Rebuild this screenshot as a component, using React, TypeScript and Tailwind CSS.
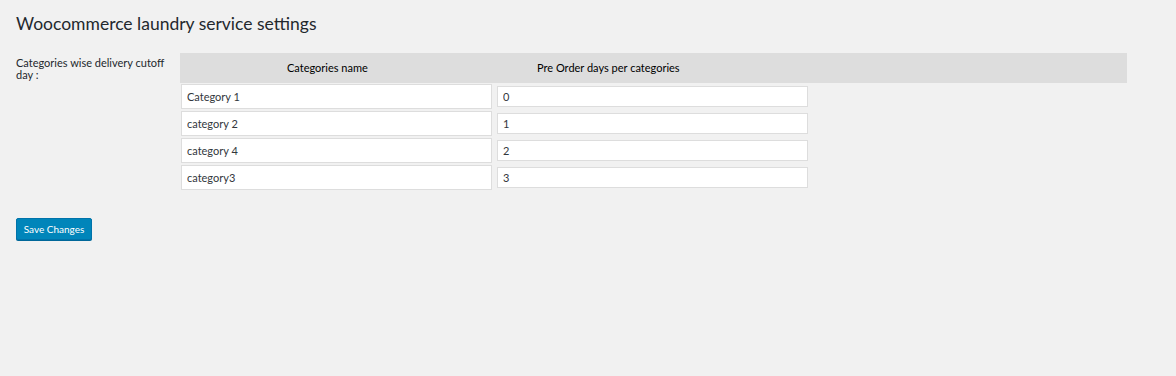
const rows = [
  { name: 'Category 1', days: '0' },
  { name: 'category 2', days: '1' },
  { name: 'category 4', days: '2' },
  { name: 'category3', days: '3' },
]

export default function App() {
  return (
    <div className="min-h-[376px] bg-[#f1f1f1] pl-4 pt-[10px] font-['Lato',sans-serif] text-[#23282d]">
      <h1 className="text-[17.5px] leading-[28px] font-normal">Woocommerce laundry service settings</h1>
      <div className="mt-[15px] flex">
        <div className="w-[164px] pt-[4px] text-[11px] leading-[12px]">
          Categories wise delivery cutoff day :
        </div>
        <div className="flex flex-col">
          <div className="flex h-[30px] w-[947px] items-center bg-[#dddddd] text-[11px] text-black">
            <span className="w-[357px] pl-[107px]">Categories name</span>
            <span>Pre Order days per categories</span>
          </div>
          <div className="mt-[1px] flex flex-col gap-[2px] pl-[1px]">
            {rows.map((r) => (
              <div key={r.name} className="flex h-[25px] items-center gap-[5px]">
                <input
                  readOnly
                  value={r.name}
                  className="h-[25px] w-[311px] border border-[#dddddd] bg-white px-[5px] text-[11px] text-[#32373c] outline-none"
                />
                <input
                  readOnly
                  value={r.days}
                  className="h-[21px] w-[311px] border border-[#dddddd] bg-white px-[5px] text-[11px] text-[#32373c] outline-none"
                />
              </div>
            ))}
          </div>
        </div>
      </div>
      <button className="mt-[28px] h-[22px] w-[76px] rounded-[2px] border border-[#0073aa] bg-[#0085ba] text-[10px] text-white shadow-[0_1px_0_#006799]">
        Save Changes
      </button>
    </div>
  )
}
